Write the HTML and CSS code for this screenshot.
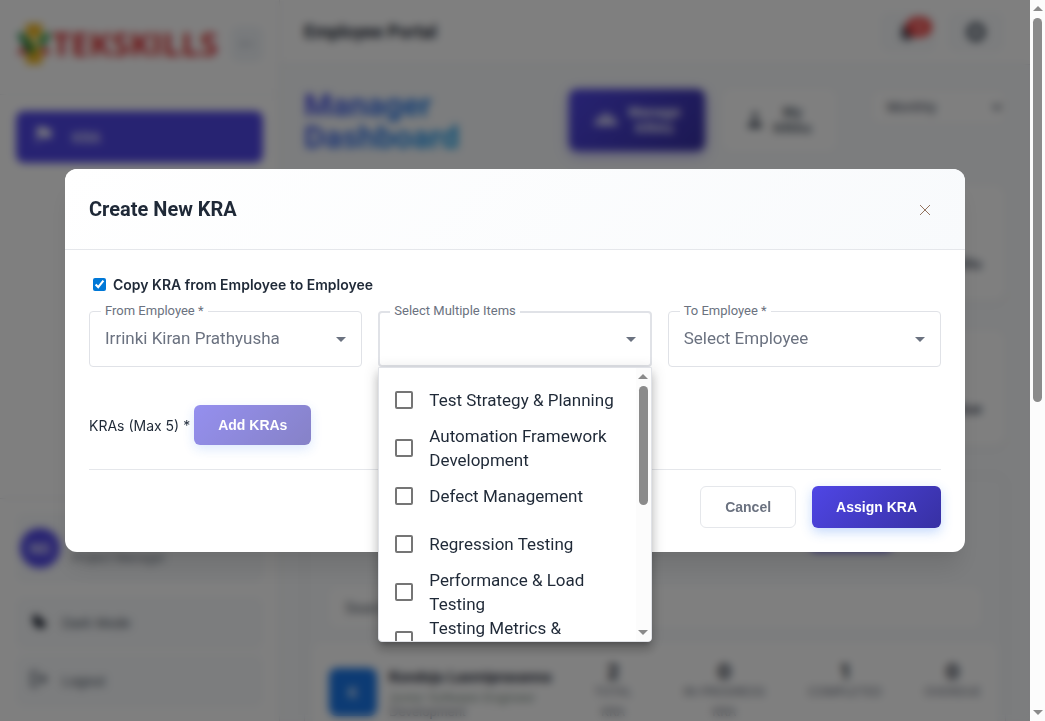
FILE: index.html
```html
<!DOCTYPE html>
<html lang="en">
<head>
<meta charset="utf-8">
<meta name="viewport" content="width=device-width, initial-scale=1">
<title>Employee Portal</title>
<link rel="stylesheet" href="styles.css">
</head>
<body>
<div class="screen">
  <div class="app">
    <aside class="sidebar">
      <div class="brand">
        <div class="logo">
          <svg width="36" height="42" viewBox="0 0 36 42" aria-hidden="true">
            <path d="M10 1h16v10l-8 8-8-8zM10 28l8-6 8 6v13H10z" fill="#f0b41c"/>
            <path d="M18 10l8 10-8 12-8-12z" fill="#f0c020"/>
            <path d="M1 12l5-3 13 16-4 8z" fill="#12813a"/>
            <path d="M35 12l-5-3-9 10 5 6z" fill="#1f9a48"/>
            <path d="M1 31l6-9 5 9zM24 31l5-9 6 9z" fill="#d93434"/>
            <path d="M15 16l4-3 5 6-4 5z" fill="#fff3b8"/>
          </svg>
          <span class="logo-text">TEKSKILLS</span>
        </div>
        <button class="collapse" type="button" aria-label="Collapse">
          <svg width="14" height="10" viewBox="0 0 14 10"><path d="M0 5h14M4 3L1 5l3 2" stroke="#8b93a0" stroke-width="1" fill="none"/></svg>
        </button>
      </div>
      <nav class="nav">
        <a class="nav-item" href="#kra">
          <svg width="18" height="22" viewBox="0 0 18 22" aria-hidden="true"><path d="M2 1h7l1 2h6v9h-6l-1-2H4v7H2z" fill="#fff"/></svg>
          <span>KRA</span>
        </a>
      </nav>
      <div class="sidebar-foot">
        <div class="user">
          <span class="avatar">NG</span>
          <div><div class="user-name">Manager</div><div class="user-role">Project Manager</div></div>
        </div>
        <button class="side-btn dark" type="button">
          <svg width="18" height="22" viewBox="0 0 18 22" aria-hidden="true"><path d="M6 2C2 4 2 9 5 13s8 4 10 1c2-2 0-5-3-6S8 3 6 2z" fill="#111827"/></svg>
          <span>Dark Mode</span>
        </button>
        <button class="side-btn" type="button">
          <svg width="18" height="22" viewBox="0 0 18 22" aria-hidden="true"><path d="M8 2H2v14h6M6 9h10M11 5l5 4-5 4" stroke="#4b5563" stroke-width="2" fill="none"/></svg>
          <span>Logout</span>
        </button>
      </div>
    </aside>

    <main class="main">
      <header class="topbar">
        <h1 class="portal">Employee Portal</h1>
        <div class="topbar-actions">
          <button class="icon-btn" type="button" aria-label="Notifications">
            <svg width="20" height="20" viewBox="0 0 20 20"><path d="M9 2a5 5 0 0 0-5 5v5l-2 4h14l-2-4V7a5 5 0 0 0-5-5zM7 17h4v2H7z" fill="#374151"/></svg>
            <span class="badge">15</span>
          </button>
          <button class="icon-btn" type="button" aria-label="Settings">
            <svg width="22" height="22" viewBox="0 0 22 22"><circle cx="11" cy="11" r="7" fill="none" stroke="#4b5563" stroke-width="5"/></svg>
          </button>
        </div>
      </header>
      <div class="content">
        <div class="heading">
          <h2 class="title">Manager<br>Dashboard</h2>
          <div class="tabs">
            <button class="tab tab-active" type="button">
              <svg width="24" height="16" viewBox="0 0 24 16" aria-hidden="true"><circle cx="12" cy="4" r="3" fill="#fff"/><circle cx="5" cy="6" r="2" fill="#fff"/><circle cx="19" cy="6" r="2" fill="#fff"/><path d="M0 13v-2l4-2h3l3-1h4l3 1h3l4 2v2z" fill="#fff"/></svg>
              <span>Manage<br>KRAs</span>
            </button>
            <button class="tab" type="button">
              <svg width="16" height="20" viewBox="0 0 16 20" aria-hidden="true"><circle cx="8" cy="5" r="3" fill="#4b5563"/><path d="M1 18v-3l4-4h6l4 4v3z" fill="#4b5563"/></svg>
              <span>My<br>KRAs</span>
            </button>
          </div>
          <div class="period">
            <select class="period-select" aria-label="Period"><option>Monthly</option></select>
            <svg class="period-arrow" width="10" height="7" viewBox="0 0 10 7" aria-hidden="true"><path d="M1 1l4 4 4-4" stroke="#374151" stroke-width="2" fill="none"/></svg>
          </div>
        </div>
        <section class="card"><span>Total KRAs</span></section>
        <section class="card"><span>Overdue</span></section>
        <section class="panel">
          <div class="panel-head"><button class="create" type="button">Create KRA</button></div>
          <input class="search" type="text" aria-label="Search" placeholder="Search employees">
          <div class="employee">
            <span class="tile">K</span>
            <div class="who">
              <div class="name">Kondoju Laxmiprasanna</div>
              <div class="job">Junior Software Engineer</div>
              <div class="dept">Development</div>
            </div>
            <div class="stats">
              <div class="stat"><b>2</b><span>TOTAL<br>KRA</span></div>
              <div class="stat"><b>0</b><span>IN-PROGRESS<br>KRA</span></div>
              <div class="stat"><b>1</b><span>COMPLETED</span></div>
              <div class="stat"><b>0</b><span>OVERDUE</span></div>
            </div>
          </div>
        </section>
      </div>
    </main>
  </div>

  <div class="overlay">
    <form class="modal" role="dialog" aria-labelledby="modal-title">
      <header class="modal-head">
        <h2 class="modal-title" id="modal-title">Create New KRA</h2>
        <button class="close" type="button" aria-label="Close">
          <svg width="10" height="12" viewBox="0 0 10 12"><path d="M0 2l10 10M10 2L0 12" stroke="#94745f" stroke-width="1"/></svg>
        </button>
      </header>
      <div class="modal-body">
        <label class="copy"><input class="copy-box" type="checkbox" checked>Copy KRA from Employee to Employee</label>
        <div class="fields">
          <div class="field">
            <select class="field-select" id="from"><option>Irrinki Kiran Prathyusha</option></select>
            <label class="field-label" for="from">From Employee *</label>
            <svg class="field-arrow" width="10" height="5" viewBox="0 0 10 5" aria-hidden="true"><path d="M0 0h10L5 5z"/></svg>
          </div>
          <div class="field">
            <select class="field-select field-open" id="items"><option></option></select>
            <label class="field-label" for="items">Select Multiple Items</label>
            <svg class="field-arrow" width="10" height="5" viewBox="0 0 10 5" aria-hidden="true"><path d="M0 0h10L5 5z"/></svg>
            <div class="menu">
              <div class="menu-list">
                <label class="option"><input class="option-box" type="checkbox"><span>Test Strategy &amp; Planning</span></label>
                <label class="option"><input class="option-box" type="checkbox"><span>Automation Framework Development</span></label>
                <label class="option"><input class="option-box" type="checkbox"><span>Defect Management</span></label>
                <label class="option"><input class="option-box" type="checkbox"><span>Regression Testing</span></label>
                <label class="option"><input class="option-box" type="checkbox"><span>Performance &amp; Load Testing</span></label>
                <label class="option"><input class="option-box" type="checkbox"><span>Testing Metrics &amp; Reporting</span></label>
              </div>
              <div class="bar" aria-hidden="true">
                <svg width="10" height="5" viewBox="0 0 10 5"><path d="M0 5h10L5 0z" fill="#8b8b8b"/></svg>
                <div class="track"><div class="thumb menu-thumb"></div></div>
                <svg width="10" height="5" viewBox="0 0 10 5"><path d="M0 0h10L5 5z" fill="#8b8b8b"/></svg>
              </div>
            </div>
          </div>
          <div class="field">
            <select class="field-select" id="to"><option>Select Employee</option></select>
            <label class="field-label" for="to">To Employee *</label>
            <svg class="field-arrow" width="10" height="5" viewBox="0 0 10 5" aria-hidden="true"><path d="M0 0h10L5 5z"/></svg>
          </div>
        </div>
        <div class="kras">
          <span class="kras-label">KRAs (Max 5) *</span>
          <button class="btn btn-primary btn-add" type="button" disabled>Add KRAs</button>
        </div>
        <footer class="modal-foot">
          <button class="btn btn-plain" type="button">Cancel</button>
          <button class="btn btn-primary" type="submit">Assign KRA</button>
        </footer>
      </div>
    </form>
  </div>
</div>
<div class="bar page-bar" aria-hidden="true">
  <svg width="10" height="5" viewBox="0 0 10 5"><path d="M0 5h10L5 0z" fill="#8b8b8b"/></svg>
  <div class="track"><div class="thumb page-thumb"></div></div>
  <svg width="10" height="5" viewBox="0 0 10 5"><path d="M0 0h10L5 5z" fill="#8b8b8b"/></svg>
</div>
</body>
</html>
```

FILE: styles.css
```css
* { box-sizing: border-box; }
body {
  margin: 0;
  display: flex;
  height: 100vh;
  overflow: hidden;
  font-family: Inter, sans-serif;
  font-size: 14px;
  color: #1f2937;
  background: #fff;
}
button, select, input { font-family: inherit; }
h1, h2 { margin: 0; }

.screen { position: relative; flex: 1; min-width: 0; overflow: hidden; }
.app { display: flex; height: 100%; }

/* Sidebar */
.sidebar {
  width: 280px;
  flex: none;
  display: flex;
  flex-direction: column;
  background: #fff;
  border-right: 1px solid #e5e7eb;
}
.brand {
  display: flex;
  align-items: center;
  justify-content: space-between;
  height: 95px;
  padding: 0 16px 6px;
  border-bottom: 1px solid #eef0f3;
}
.logo { display: flex; align-items: center; }
.logo-text { font: bold 33px/42px "Open Sans", sans-serif; color: #d92f32; }
.collapse {
  width: 32px;
  height: 36px;
  padding: 0;
  border: 0;
  border-radius: 8px;
  background: #f1f5f9;
}
.nav { padding: 16px; flex: 1; }
.nav-item {
  display: flex;
  align-items: center;
  gap: 19px;
  height: 52px;
  padding: 0 19px;
  border-radius: 8px;
  background: #4f46e5;
  color: #fff;
  font-weight: 500;
  text-decoration: none;
}
.sidebar-foot {
  display: flex;
  flex-direction: column;
  gap: 6px;
  padding: 14px 16px;
  border-top: 1px solid #e5e7eb;
}
.user {
  display: flex;
  align-items: center;
  gap: 12px;
  height: 70px;
  margin-bottom: 8px;
  padding: 0 4px;
  border-radius: 8px;
  background: #f8fafc;
}
.avatar {
  display: grid;
  place-items: center;
  width: 40px;
  height: 40px;
  border-radius: 50%;
  background: #4f46e5;
  color: #fff;
  font-weight: 600;
}
.user-name { font-weight: 600; line-height: 20px; }
.user-role { font-size: 12px; line-height: 20px; color: #6b7280; }
.side-btn {
  display: flex;
  align-items: center;
  gap: 14px;
  height: 52px;
  padding: 0 14px;
  border: 0;
  border-radius: 8px;
  background: #f8fafc;
  color: #4b5563;
  font: 14px/20px "Liberation Sans", sans-serif;
}

/* Main column */
.main { flex: 1; min-width: 0; background: #f8fafc; }
.topbar {
  display: flex;
  align-items: center;
  justify-content: space-between;
  height: 65px;
  padding: 0 26px 0 24px;
  background: #fff;
  border-bottom: 1px solid #e5e7eb;
}
.portal { font: bold 18px/24px Roboto, sans-serif; }
.topbar-actions { display: flex; gap: 12px; }
.icon-btn {
  position: relative;
  display: grid;
  place-items: center;
  width: 56px;
  height: 40px;
  padding: 0;
  border: 0;
  border-radius: 8px;
  background: #f8fafc;
}
.badge {
  position: absolute;
  top: 5px;
  right: 4px;
  width: 26px;
  height: 20px;
  border-radius: 10px;
  background: #ef4444;
  color: #fff;
  font-size: 11px;
  line-height: 20px;
}
.content { padding: 24px; }
.heading { display: flex; justify-content: space-between; align-items: flex-start; }
.title {
  font: bold 32px/32px Roboto, sans-serif;
  color: transparent;
  background: linear-gradient(135deg, #4f46e5, #0ea5e9);
  background-clip: text;
}
.tabs { display: flex; gap: 18px; margin-left: 76px; }
.tab {
  display: flex;
  align-items: center;
  justify-content: center;
  gap: 10px;
  min-width: 106px;
  height: 62px;
  padding: 0 24px;
  border: 0;
  border-radius: 8px;
  background: #fff;
  color: #4b5563;
  font: bold 14px/16px "Liberation Sans", sans-serif;
}
.tab-active {
  min-width: 136px;
  background: linear-gradient(135deg, #4f46e5, #3730a3);
  color: #fff;
  box-shadow: 0 4px 12px #4f46e566;
}
.period { position: relative; }
.period-select {
  appearance: none;
  width: 136px;
  height: 36px;
  padding: 0 16px;
  border: 1px solid #eef0f3;
  border-radius: 8px;
  background: #fff;
  color: #374151;
  font-size: 13px;
}
.period-arrow { position: absolute; right: 4px; top: 15px; }
.card {
  display: flex;
  align-items: center;
  justify-content: flex-end;
  height: 116px;
  margin-top: 29px;
  padding: 40px 24px 0;
  border-radius: 12px;
  background: #fff;
  color: #374151;
  font-weight: 600;
  box-shadow: 0 1px 3px #0000001a;
}
.heading + .card { margin-top: 32px; }
.panel {
  margin-top: 29px;
  padding: 24px 8px;
  border: 1px solid #e5e7eb;
  border-radius: 12px;
  background: #f8fafc;
}
.panel-head { display: flex; justify-content: flex-end; height: 54px; padding-right: 104px; }
.create {
  height: 51px;
  border: 0;
  border-radius: 8px;
  background: #4f46e5;
  color: #fff;
}
.search {
  display: block;
  width: calc(100% - 32px);
  height: 40px;
  margin: 33px 16px 16px;
  padding: 0 16px;
  border: 0;
  border-radius: 8px;
  background: #fff;
  font-size: 14px;
}
.search::placeholder { color: #4b5563; }
.employee {
  display: flex;
  gap: 12px;
  padding: 25px 16px;
  background: #fff;
  border-radius: 8px;
}
.tile {
  display: grid;
  place-items: center;
  flex: none;
  width: 48px;
  height: 48px;
  border-radius: 8px;
  background: #1976e8;
  color: #fff;
  font-weight: 600;
}
.who { width: 176px; flex: none; white-space: nowrap; }
.name { font: bold 15px/18px Roboto, sans-serif; }
.job { margin-top: 5px; font: 13px/14px "Liberation Sans", sans-serif; color: #7d8f86; }
.dept { font: 13px/14px "Liberation Sans", sans-serif; color: #6b7280; }
.stats { display: flex; flex: 1; justify-content: space-between; margin-left: 8px; }
.stat { display: flex; flex-direction: column; align-items: center; min-width: 56px; }
.stat b { font-size: 20px; line-height: 8px; padding-bottom: 6px; }
.stat span { font-size: 12px; line-height: 20px; text-align: center; color: #6b7280; }

/* Modal */
.overlay {
  position: absolute;
  inset: 0;
  display: flex;
  align-items: center;
  justify-content: center;
  background: #00000080;
  backdrop-filter: blur(4px);
}
.modal {
  width: 90%;
  max-width: 900px;
  border-radius: 12px;
  background: #fff;
  box-shadow: 0 20px 25px -5px #0000001a, 0 10px 10px -5px #0000000a;
}
.modal-head {
  display: flex;
  align-items: center;
  justify-content: space-between;
  padding: 24px;
  border-bottom: 1px solid #e5e7eb;
  border-radius: 12px 12px 0 0;
  background: linear-gradient(135deg, #fff, #f8fafc);
}
.modal-title { font: bold 20px/32px Roboto, sans-serif; }
.close {
  display: grid;
  place-items: center;
  width: 32px;
  height: 32px;
  padding: 0;
  border: 0;
  background: transparent;
}
.modal-body { padding: 24px; }
.copy {
  display: flex;
  align-items: center;
  height: 21px;
  margin-bottom: 16px;
  font-weight: 600;
}
.copy-box { width: 13px; height: 13px; margin: 0 7px 0 4px; accent-color: #0078d7; }
.fields { display: grid; grid-template-columns: repeat(3, 1fr); gap: 16px; }
.field { position: relative; font-family: Roboto, sans-serif; }
.field-select {
  appearance: none;
  display: block;
  width: 100%;
  height: 56px;
  padding: 0 40px 2px 15px;
  border: 1px solid #e0e2e7;
  border-radius: 4px;
  background: #fff;
  color: #6b7280;
  font-size: 17px;
}
.field-open { border-width: 2px; }
.field-label {
  position: absolute;
  top: -8px;
  left: 12px;
  padding: 0 4px;
  background: #fff;
  color: #6b7280;
  font-size: 13px;
  line-height: 16px;
}
.field-arrow { position: absolute; top: 26px; right: 16px; fill: #6b7280; pointer-events: none; }
.menu {
  position: absolute;
  z-index: 1;
  top: 100%;
  left: 0;
  right: 0;
  display: flex;
  height: 275px;
  overflow: hidden;
  border: 1px solid #e0e2e7;
  border-radius: 0 0 4px 4px;
  background: #fff;
  box-shadow: 0 5px 5px -3px #00000033, 0 8px 10px 1px #00000024, 0 3px 14px 2px #0000001f;
}
.menu-list { flex: 1; padding: 8px 0; overflow: hidden; }
.option {
  display: flex;
  align-items: center;
  gap: 16px;
  min-height: 48px;
  padding: 0 16px;
  font-size: 17px;
  line-height: 24px;
}
.option-box {
  appearance: none;
  flex: none;
  width: 18px;
  height: 18px;
  margin: 0;
  border: 2px solid #757575;
  border-radius: 2px;
}
.kras { display: flex; align-items: center; gap: 4px; margin: 38px 0 24px; }
.kras-label { font-size: 14px; }
.btn {
  padding: 12px 24px;
  border: 0;
  border-radius: 6px;
  font: bold 14px/18px "Liberation Sans", sans-serif;
}
.btn-primary {
  background: linear-gradient(135deg, #4f46e5, #3730a3);
  color: #fff;
  box-shadow: 0 4px 12px #3b82f64d;
}
.btn-add { padding: 11px 24px; opacity: 0.6; }
.btn-plain { padding: 11px 24px; border: 1px solid #e5e7eb; background: #fff; color: #6b7280; }
.modal-foot {
  display: flex;
  justify-content: flex-end;
  gap: 16px;
  padding-top: 16px;
  border-top: 1px solid #e5e7eb;
}

/* Scroll bars */
.bar {
  display: flex;
  flex-direction: column;
  align-items: center;
  flex: none;
  width: 15px;
  padding: 6px 0;
  background: #fcfcfc;
}
.bar svg { flex: none; }
.track { flex: 1; padding: 7px 0; }
.thumb { width: 9px; border-radius: 5px; background: #8b8b8b; }
.page-thumb { height: 56%; }
.menu-thumb { height: 50%; }
```
